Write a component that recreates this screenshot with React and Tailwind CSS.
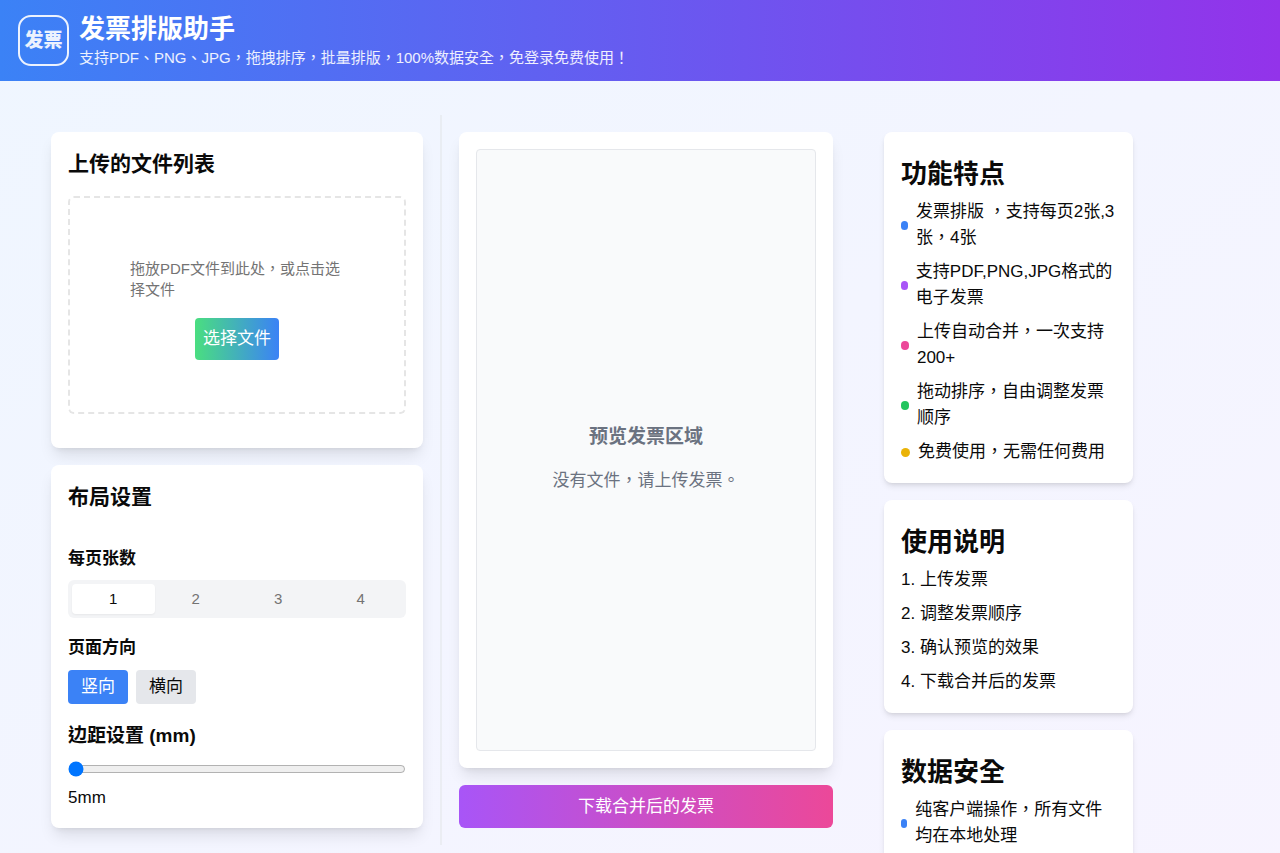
import { useState } from "react";

const FEATURES = [
  { dot: "bg-[#3b82f6]", text: "发票排版 ，支持每页2张,3张，4张" },
  { dot: "bg-[#a855f7]", text: "支持PDF,PNG,JPG格式的电子发票" },
  { dot: "bg-[#ec4899]", text: "上传自动合并，一次支持200+" },
  { dot: "bg-[#22c55e]", text: "拖动排序，自由调整发票顺序" },
  { dot: "bg-[#eab308]", text: "免费使用，无需任何费用" },
];

const STEPS = ["上传发票", "调整发票顺序", "确认预览的效果", "下载合并后的发票"];

const SECURITY = [{ dot: "bg-[#3b82f6]", text: "纯客户端操作，所有文件均在本地处理" }];

function InfoCard({ title, children }) {
  return (
    <section className="rounded-lg bg-white px-[17px] pt-[25px] pb-[18px] shadow-md">
      <h2 className="mb-2 text-[26px] leading-[34px] font-semibold">{title}</h2>
      {children}
    </section>
  );
}

function BulletList({ items }) {
  return (
    <ul className="flex flex-col gap-2">
      {items.map((item) => (
        <li key={item.text} className="flex items-center">
          <span className={`mr-2 h-[9px] w-[9px] rounded-full ${item.dot}`} />
          <span>{item.text}</span>
        </li>
      ))}
    </ul>
  );
}

export default function App() {
  const [perPage, setPerPage] = useState(1);
  const [direction, setDirection] = useState("竖向");
  const [margin, setMargin] = useState(5);

  return (
    <div className="min-h-screen bg-linear-to-br/srgb from-[#eff6ff] to-[#f7f4ff] font-['Liberation_Sans','Noto_Sans_CJK_TC',sans-serif] text-[17px] leading-[26px] text-[#0a0a0a]">
      <header className="flex items-center gap-[10px] bg-linear-to-r/srgb from-[#3b82f6] to-[#9333ea] px-[18px] py-3 text-white">
        <div className="flex size-[51px] shrink-0 items-center justify-center rounded-[13px] border-2 border-white/90 text-[19px] font-black text-white/90">
          发票
        </div>
        <div>
          <h1 className="text-[26px] leading-[34px] font-semibold">发票排版助手</h1>
          <p className="text-[15px] leading-[23px] text-white/90">
            支持PDF、PNG、JPG，拖拽排序，批量排版，100%数据安全，免登录免费使用！
          </p>
        </div>
      </header>

      <main className="grid grid-cols-[816fr_300fr_96fr] items-start p-[34px]">
        <div className="grid grid-cols-2">
          <div className="flex flex-col gap-[17px] border-r-2 border-gray-200/60 p-[17px]">
            <section className="rounded-lg bg-white px-[17px] pt-[17px] pb-[34px] shadow-lg">
              <h2 className="mb-[17px] text-[21px] leading-[30px] font-semibold">上传的文件列表</h2>
              <div className="flex flex-col items-center rounded-md border-2 border-dashed border-[#e5e5e5] px-[60px] pt-[60px] pb-[52px]">
                <p className="mb-[18px] text-[15px] leading-[21px] text-[#737373]">
                  拖放PDF文件到此处，或点击选择文件
                </p>
                <button
                  type="button"
                  className="rounded bg-linear-to-r/srgb from-[#4ade80] to-[#3b82f6] p-2 text-white"
                >
                  选择文件
                </button>
              </div>
            </section>

            <section className="rounded-lg bg-white p-[17px] shadow-lg">
              <h2 className="mb-[34px] text-[21px] leading-[30px] font-semibold">布局设置</h2>
              <h3 className="mb-2 font-bold">每页张数</h3>
              <div className="mb-[17px] grid grid-cols-4 rounded-md bg-gray-100 p-1">
                {[1, 2, 3, 4].map((n) => (
                  <button
                    key={n}
                    type="button"
                    aria-pressed={perPage === n}
                    onClick={() => setPerPage(n)}
                    className={
                      perPage === n
                        ? "rounded bg-white text-[15px] leading-[30px] shadow-xs"
                        : "rounded text-[15px] leading-[30px] text-[#737373]"
                    }
                  >
                    {n}
                  </button>
                ))}
              </div>
              <h3 className="mb-[9px] font-bold">页面方向</h3>
              <div className="mb-[17px] flex gap-2">
                {["竖向", "横向"].map((d) => (
                  <button
                    key={d}
                    type="button"
                    aria-pressed={direction === d}
                    onClick={() => setDirection(d)}
                    className={
                      direction === d
                        ? "rounded bg-[#3b82f6] px-[13px] py-1 text-white"
                        : "rounded bg-gray-200 px-[13px] py-1"
                    }
                  >
                    {d}
                  </button>
                ))}
              </div>
              <label htmlFor="margin" className="mb-[10px] block text-[19px] leading-[30px] font-bold">
                边距设置 (mm)
              </label>
              <input
                id="margin"
                type="range"
                min="5"
                max="50"
                value={margin}
                onChange={(e) => setMargin(Number(e.target.value))}
                className="block w-full"
              />
              <p className="mt-2">{margin}mm</p>
            </section>
          </div>

          <div className="flex flex-col gap-[17px] p-[17px]">
            <section className="flex flex-1 rounded-lg bg-white p-[17px] shadow-lg">
              <div className="flex flex-1 flex-col items-center justify-center rounded border border-gray-200 bg-gray-50 pt-4 text-[#6b7280]">
                <h2 className="mb-[17px] text-[19px] leading-[28px] font-bold">预览发票区域</h2>
                <p>没有文件，请上传发票。</p>
              </div>
            </section>
            <button
              type="button"
              className="rounded-md bg-linear-to-r/srgb from-[#a855f7] to-[#ec4899] py-2 leading-[27px] text-white"
            >
              下载合并后的发票
            </button>
          </div>
        </div>

        <aside className="flex flex-col gap-[17px] py-[17px] pr-[17px] pl-[34px]">
          <InfoCard title="功能特点">
            <BulletList items={FEATURES} />
          </InfoCard>
          <InfoCard title="使用说明">
            <ol className="flex list-inside list-decimal flex-col gap-2">
              {STEPS.map((step) => (
                <li key={step}>{step}</li>
              ))}
            </ol>
          </InfoCard>
          <InfoCard title="数据安全">
            <BulletList items={SECURITY} />
          </InfoCard>
        </aside>
      </main>
    </div>
  );
}
